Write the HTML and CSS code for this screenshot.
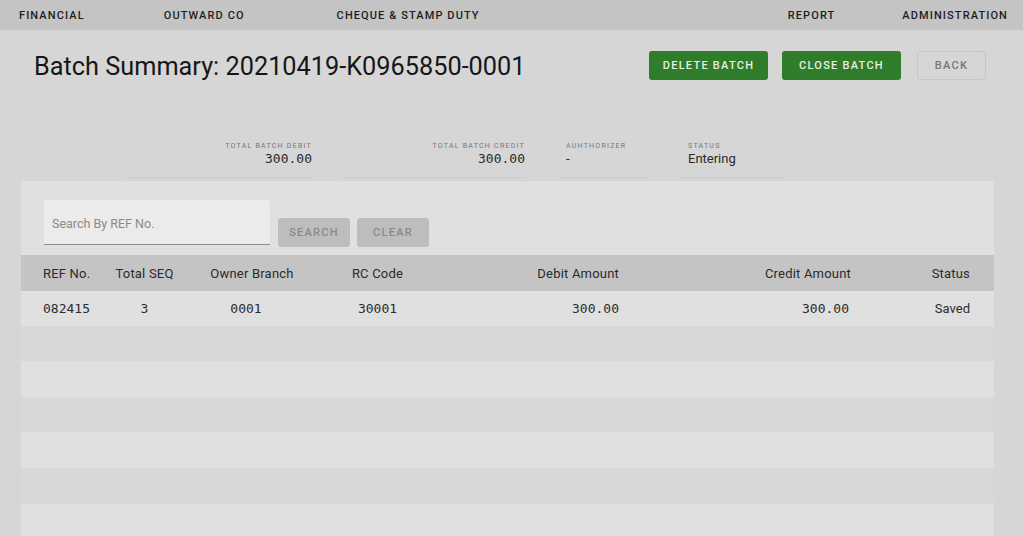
FILE: index.html
```html
<!DOCTYPE html>
<html>
<head>
<meta charset="utf-8">
<link rel="stylesheet" href="styles.css">
</head>
<body>
<nav class="nav">
  <span class="nav-item ni-1">FINANCIAL</span>
  <span class="nav-item ni-2">OUTWARD CO</span>
  <span class="nav-item ni-3">CHEQUE &amp; STAMP DUTY</span>
  <span class="nav-item ni-4">REPORT</span>
  <span class="nav-item ni-5">ADMINISTRATION</span>
</nav>
<header class="head">
  <h1 class="title">Batch Summary: 20210419-K0965850-0001</h1>
  <div class="actions">
    <button class="btn btn-green">DELETE BATCH</button>
    <button class="btn btn-green btn-close">CLOSE BATCH</button>
    <button class="btn btn-outline">BACK</button>
  </div>
</header>
<section class="summary">
  <div class="field f-debit right">
    <div class="f-label">TOTAL BATCH DEBIT</div>
    <div class="f-value mono">300.00</div>
  </div>
  <div class="field f-credit right">
    <div class="f-label">TOTAL BATCH CREDIT</div>
    <div class="f-value mono">300.00</div>
  </div>
  <div class="field f-auth">
    <div class="f-label">AUHTHORIZER</div>
    <div class="f-value">-</div>
  </div>
  <div class="field f-status">
    <div class="f-label">STATUS</div>
    <div class="f-value">Entering</div>
  </div>
</section>
<main class="card">
  <div class="search-row">
    <div class="search-input"><span class="placeholder">Search By REF No.</span></div>
    <button class="btn btn-grey">SEARCH</button>
    <button class="btn btn-grey btn-clear">CLEAR</button>
  </div>
  <div class="table">
    <div class="tr th">
      <div class="c c-ref">REF No.</div>
      <div class="c c-seq">Total SEQ</div>
      <div class="c c-branch">Owner Branch</div>
      <div class="c c-rc">RC Code</div>
      <div class="c c-debit">Debit Amount</div>
      <div class="c c-credit">Credit Amount</div>
      <div class="c c-status">Status</div>
    </div>
    <div class="tr">
      <div class="c c-ref mono">082415</div>
      <div class="c c-seq mono">3</div>
      <div class="c c-branch mono branch-data">0001</div>
      <div class="c c-rc mono">30001</div>
      <div class="c c-debit mono">300.00</div>
      <div class="c c-credit mono credit-data">300.00</div>
      <div class="c c-status">Saved</div>
    </div>
    <div class="tr alt"></div>
    <div class="tr"></div>
    <div class="tr alt"></div>
    <div class="tr"></div>
    <div class="tr alt"></div>
    <div class="tr"></div>
  </div>
</main>
</body>
</html>
```

FILE: styles.css
```css
* { box-sizing: border-box; }
html, body { margin: 0; padding: 0; }
body {
  background: #d6d6d6;
  font-family: Roboto, "Liberation Sans", sans-serif;
  color: #222;
  width: 1023px;
  height: 536px;
  overflow: hidden;
}
.mono { font-family: "DejaVu Sans Mono", "Liberation Mono", monospace; }

.nav {
  height: 30px;
  background: #c4c4c4;
  display: flex;
  align-items: center;
  padding: 0 15px 0 19px;
}
.nav-item {
  font-size: 11px;
  font-weight: 500;
  letter-spacing: 1.1px;
  color: #1e1e1e;
  white-space: nowrap;
}
.ni-2 { margin-left: 79px; }
.ni-3 { margin-left: 92px; }
.ni-4 { margin-left: auto; }
.ni-5 { margin-left: 67px; }

.head {
  display: flex;
  align-items: flex-start;
  justify-content: space-between;
  padding: 21px 37px 0 34px;
}
.title {
  margin: 0;
  padding-top: 1px;
  font-size: 25.3px;
  font-weight: 400;
  line-height: 29px;
  color: #161616;
  letter-spacing: 0;
}
.actions { display: flex; }
.btn {
  height: 29px;
  border: 0;
  border-radius: 3px;
  font-family: Roboto, "Liberation Sans", sans-serif;
  font-size: 11px;
  font-weight: 500;
  letter-spacing: 1.25px;
  padding: 0;
  cursor: pointer;
}
.btn-green {
  width: 119px;
  background: #2f7d2b;
  color: #e8efe6;
}
.btn-close { margin-left: 14px; }
.btn-outline {
  margin-left: 16px;
  width: 69px;
  background: transparent;
  border: 1px solid #c6c6c6;
  color: #777;
}

.summary {
  display: flex;
  padding-left: 127px;
  margin-top: 61px;
}
.field {
  border-bottom: 1px solid #cbcbcb;
  padding-bottom: 10px;
}
.field.right { text-align: right; }
.f-debit { width: 185px; }
.f-credit { width: 185px; margin-left: 28px; }
.f-auth { width: 87px; margin-left: 35px; padding-left: 6px; }
.f-status { width: 102px; margin-left: 35px; padding-left: 6px; }
.f-label {
  font-size: 7px;
  line-height: 9px;
  letter-spacing: 1.25px;
  color: #757575;
}
.f-value {
  font-size: 13px;
  line-height: 16px;
  color: #2a2a2a;
}

.card {
  margin: 3px 29px 0 21px;
  background: #e0e0e0;
  border-radius: 3px 3px 0 0;
  height: 355px;
  overflow: hidden;
}
.search-row {
  display: flex;
  align-items: flex-start;
  padding: 19px 23px 0;
  height: 74px;
}
.search-input {
  width: 226px;
  height: 45px;
  background: #ebebeb;
  border-bottom: 1px solid #8d8d8d;
  border-radius: 3px 3px 0 0;
  padding: 13px 8px 0;
}
.placeholder {
  font-size: 12.5px;
  color: #8a8a8a;
}
.btn-grey {
  margin-top: 18px;
  margin-left: 8px;
  width: 72px;
  background: #bdbdbd;
  color: #8a8a8a;
}
.btn-clear { margin-left: 7px; }

.tr {
  display: grid;
  grid-template-columns: 57px 89px 126px 125px 195px 232px 103px;
  padding-left: 22px;
  align-items: center;
  height: 35.5px;
  font-size: 13px;
  color: #2c2c2c;
  border-bottom: 1px solid #dadada;
}
.tr.alt { background: #d8d8d8; border-bottom-color: #dcdcdc; }
.tr.th {
  background: #c4c4c4;
  height: 36px;
  border-bottom: 0;
  color: #2a2a2a;
  letter-spacing: 0.2px;
}
.c { white-space: nowrap; }
.c-seq, .c-branch, .c-rc { text-align: center; }
.c-debit, .c-credit, .c-status { text-align: right; padding-right: 16px; }
.c-status { padding-right: 0; }
.branch-data { padding-right: 12px; }
.credit-data { padding-right: 18px; }
```
